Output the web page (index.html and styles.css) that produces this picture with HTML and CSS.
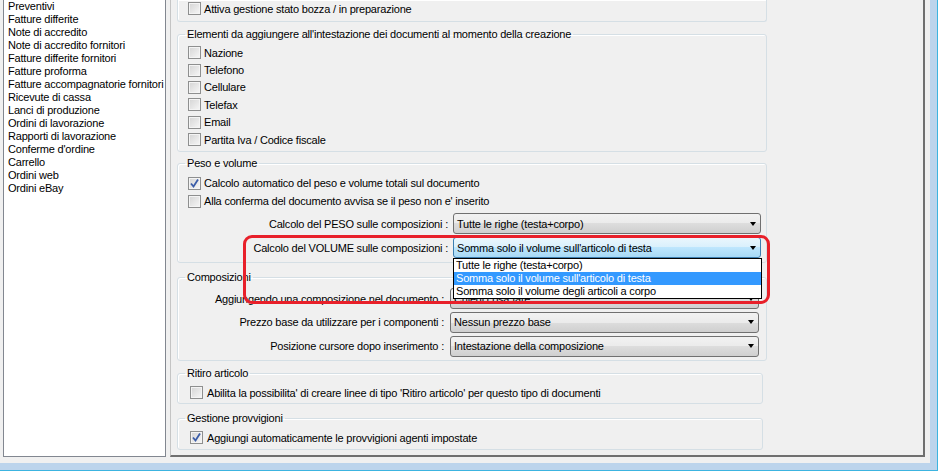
FILE: index.html
```html
<!DOCTYPE html>
<html lang="it">
<head>
    <meta charset="UTF-8">
    <title>Opzioni documenti</title>
    <link rel="stylesheet" href="styles.css">
</head>
<body>

<div class="window">
    <div class="frame">
        <ul class="doc-list">
            <li>Preventivi</li>
            <li>Fatture differite</li>
            <li>Note di accredito</li>
            <li>Note di accredito fornitori</li>
            <li>Fatture differite fornitori</li>
            <li>Fatture proforma</li>
            <li>Fatture accompagnatorie fornitori</li>
            <li>Ricevute di cassa</li>
            <li>Lanci di produzione</li>
            <li>Ordini di lavorazione</li>
            <li>Rapporti di lavorazione</li>
            <li>Conferme d'ordine</li>
            <li>Carrello</li>
            <li>Ordini web</li>
            <li>Ordini eBay</li>
        </ul>

        <div class="panel">
            <fieldset class="group group-first">
                <div class="check-row"><span class="check"></span>Attiva gestione stato bozza / in preparazione</div>
            </fieldset>

            <fieldset class="group group-header">
                <legend>Elementi da aggiungere all'intestazione dei documenti al momento della creazione</legend>
                <div class="check-row"><span class="check"></span>Nazione</div>
                <div class="check-row"><span class="check"></span>Telefono</div>
                <div class="check-row"><span class="check"></span>Cellulare</div>
                <div class="check-row"><span class="check"></span>Telefax</div>
                <div class="check-row"><span class="check"></span>Email</div>
                <div class="check-row"><span class="check"></span>Partita Iva / Codice fiscale</div>
            </fieldset>

            <fieldset class="group group-weight">
                <legend>Peso e volume</legend>
                <div class="check-row"><span class="check checked"><svg width="11" height="11" viewBox="0 0 11 11"><polyline points="2,5.5 4.5,8.5 9,1.5" /></svg></span>Calcolo automatico del peso e volume totali sul documento</div>
                <div class="check-row"><span class="check"></span>Alla conferma del documento avvisa se il peso non e' inserito</div>
                <div class="field">
                    <label>Calcolo del PESO sulle composizioni :</label>
                    <div class="combo"><span class="combo-text">Tutte le righe (testa+corpo)</span><span class="arrow"></span></div>
                </div>
                <div class="field">
                    <label>Calcolo del VOLUME sulle composizioni :</label>
                    <div class="combo open">
                        <span class="combo-text">Somma solo il volume sull'articolo di testa</span><span class="arrow"></span>
                        <ul class="dropdown">
                            <li>Tutte le righe (testa+corpo)</li>
                            <li class="selected">Somma solo il volume sull'articolo di testa</li>
                            <li>Somma solo il volume degli articoli a corpo</li>
                        </ul>
                    </div>
                </div>
            </fieldset>

            <fieldset class="group group-comp">
                <legend>Composizioni</legend>
                <div class="field">
                    <label>Aggiungendo una composizione nel documento :</label>
                    <div class="combo"><span class="combo-text">Chiedi cosa fare</span><span class="arrow"></span></div>
                </div>
                <div class="field">
                    <label>Prezzo base da utilizzare per i componenti :</label>
                    <div class="combo"><span class="combo-text">Nessun prezzo base</span><span class="arrow"></span></div>
                </div>
                <div class="field">
                    <label>Posizione cursore dopo inserimento :</label>
                    <div class="combo"><span class="combo-text">Intestazione della composizione</span><span class="arrow"></span></div>
                </div>
            </fieldset>

            <fieldset class="group group-small group-return">
                <legend>Ritiro articolo</legend>
                <div class="check-row"><span class="check"></span>Abilita la possibilita' di creare linee di tipo 'Ritiro articolo' per questo tipo di documenti</div>
            </fieldset>

            <fieldset class="group group-small group-fees">
                <legend>Gestione provvigioni</legend>
                <div class="check-row"><span class="check checked"><svg width="11" height="11" viewBox="0 0 11 11"><polyline points="2,5.5 4.5,8.5 9,1.5" /></svg></span>Aggiungi automaticamente le provvigioni agenti impostate</div>
            </fieldset>

            <div class="highlight"></div>
        </div>
    </div>
</div>

</body>
</html>
```

FILE: styles.css
```css
body {
    margin: 0;
    font-family: "Liberation Sans", Arial, sans-serif;
    font-size: 11px;
    letter-spacing: -0.2px;
    color: #000;
    background: #f0f0f0;
}

.window {
    width: 938px;
    height: 471px;
    box-sizing: border-box;
    border-right: 1px solid #3cb4e0;
    border-bottom: 1px solid #3cb4e0;
    overflow: hidden;
}

.frame {
    height: 100%;
    box-sizing: border-box;
    display: flex;
    gap: 4px;
    padding: 0 5px 6px 3px;
    border-right: 7px solid #bcd4ec;
    border-bottom: 7px solid #bcd4ec;
    background: #f0f0f0;
}

/* lista tipi documento */
.doc-list {
    width: 163px;
    box-sizing: border-box;
    margin: 0;
    padding: 0 0 0 4px;
    list-style: none;
    background: #fff;
    border: 1px solid #828790;
    border-top: none;
    line-height: 13px;
    white-space: nowrap;
    overflow: hidden;
}

.panel {
    flex: 1;
    position: relative;
    padding-left: 6px;
    border-left: 1px solid #c4c4c4;
    border-right: 2px solid #6f6f6f;
    border-bottom: 2px solid #6f6f6f;
}

/* riquadri */
.group {
    width: 590px;
    box-sizing: border-box;
    margin: 0;
    padding: 4px 0 3px;
    border: 1px solid #d5dfe5;
    border-radius: 3px;
    box-shadow: inset 1px 1px 0 #fff;
}

.group legend {
    margin-left: 7px;
    padding: 0 2px;
    line-height: 13px;
}

.group-first {
    border-top: none;
    border-radius: 0 0 3px 3px;
    padding: 0 0 4px;
}

.group-header {
    margin-top: 6px;
    padding: 3px 0 3px;
}

.group-header .check-row {
    height: 17.4px;
}

.group-weight {
    margin-top: 5px;
    padding: 4px 5px 4px 0;
}

.group-weight .check-row {
    height: 18px;
}

.group-comp {
    margin-top: 8px;
    padding: 4px 7px 3px 0;
}

.group-small {
    width: 586px;
}

.group-return {
    margin-top: 6px;
    padding: 4px 0 1px;
}

.group-fees {
    margin-top: 8px;
    padding: 4px 0 2px;
}

.group-small .check-row {
    height: 18px;
    padding-left: 12px;
}

.group-small .check {
    margin-right: 4px;
}

/* caselle di spunta */
.check-row {
    display: flex;
    align-items: center;
    height: 17px;
    padding-left: 10px;
    white-space: nowrap;
}

.check {
    width: 13px;
    height: 13px;
    box-sizing: border-box;
    margin-right: 3px;
    border: 1px solid #8e8f8f;
    background: linear-gradient(135deg, #d4d4d4, #f7f7f7);
    box-shadow: inset 0 0 0 1px #f4f4f4;
    flex-shrink: 0;
}

.check svg {
    display: block;
    fill: none;
    stroke: #3a5ca8;
    stroke-width: 1.8;
}

/* combo */
.field {
    display: flex;
    align-items: center;
    height: 21px;
    white-space: nowrap;
}

.group-weight .field {
    margin-top: 3px;
}

.group-weight .field:first-of-type {
    margin-top: 2px;
}

.group-comp .field + .field {
    margin-top: 2.6px;
}

.field label {
    flex: 1;
    text-align: right;
    padding-right: 5px;
}

.group-comp .field label {
    padding-right: 6px;
}

.combo {
    position: relative;
    width: 308px;
    height: 21px;
    box-sizing: border-box;
    display: flex;
    align-items: center;
    padding: 0 4px 0 3px;
    border: 1px solid #707070;
    border-radius: 3px;
    background: linear-gradient(#f2f2f2, #ebebeb 50%, #dddddd 50%, #cfcfcf);
}

.group-comp .combo {
    width: 309px;
}

.combo.open {
    border-color: #3c7fb1;
    background: linear-gradient(#eaf6fd, #d9f0fc 50%, #bee6fd 50%, #a7d9f5);
}

.combo-text {
    flex: 1;
}

.arrow {
    width: 0;
    height: 0;
    border-left: 3.5px solid transparent;
    border-right: 3.5px solid transparent;
    border-top: 4px solid #000;
}

.dropdown {
    position: absolute;
    top: 20px;
    left: -1px;
    width: 309px;
    box-sizing: border-box;
    margin: 0;
    padding: 0;
    list-style: none;
    background: #fff;
    border: 1px solid #000;
    line-height: 13px;
    z-index: 2;
}

.dropdown li {
    padding-left: 2px;
}

.dropdown li.selected {
    background: #3399ff;
    color: #fff;
}

/* evidenziazione */
.highlight {
    position: absolute;
    left: 72px;
    top: 235px;
    width: 527px;
    height: 69px;
    box-sizing: border-box;
    border: 3px solid #e8202a;
    border-radius: 9px;
    z-index: 3;
}
```
